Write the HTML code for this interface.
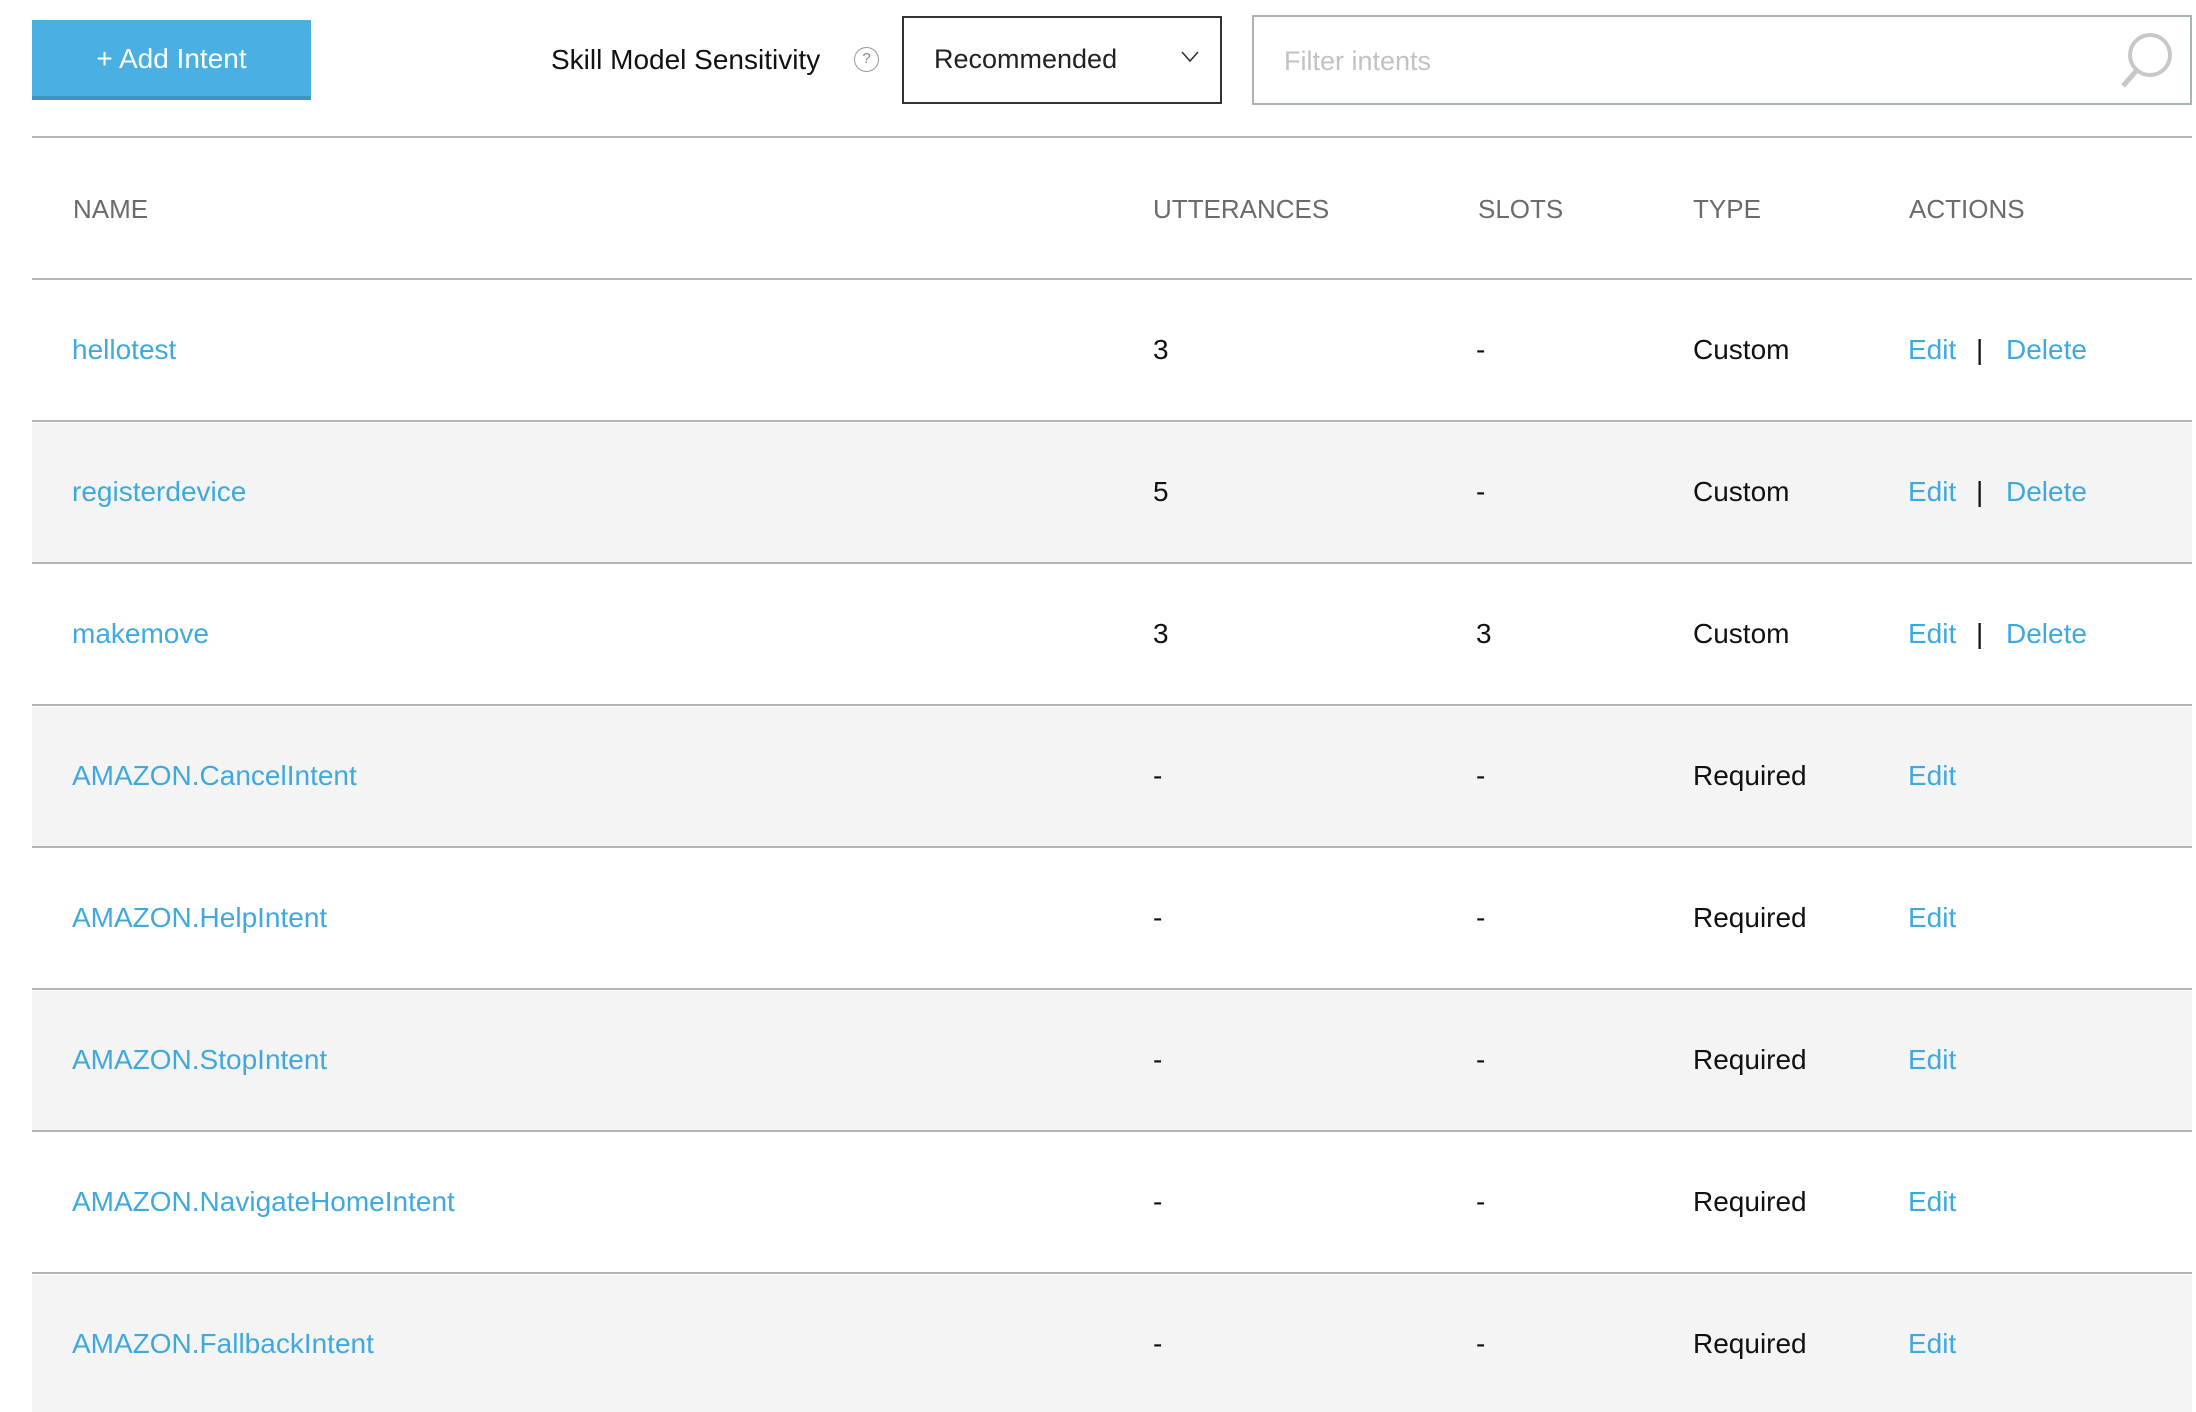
<!DOCTYPE html>
<html><head><meta charset="utf-8"><style>
*{margin:0;padding:0;box-sizing:border-box}
body{width:2196px;height:1412px;background:#fff;font-family:"Liberation Sans",sans-serif;position:relative;overflow:hidden;color:#111}
.abs{position:absolute}
.btn{left:32px;top:20px;width:279px;height:80px;background:#4aafe1;border-bottom:4px solid #3d95c0;color:#fff;font-size:28px;text-align:center;line-height:78px}
.lbl{left:551px;top:44px;font-size:28px;color:#111}
.help{left:854px;top:47px;width:25px;height:25px;border:1.5px solid #999;border-radius:50%;font-size:15px;color:#888;text-align:center;line-height:22px}
.dd{left:902px;top:16px;width:320px;height:88px;border:2px solid #333}
.dd span{position:absolute;left:30px;top:26px;font-size:27px;color:#222}
.flt{left:1252px;top:15px;width:940px;height:90px;border:2px solid #a9b3b3}
.flt span{position:absolute;left:30px;top:29px;font-size:27px;color:#c2c2c2}
.line{left:32px;width:2160px;height:2px;background:#b5b5b8}
.row{left:32px;width:2160px;height:140px}
.t{position:absolute;font-size:28px;line-height:30px}
.h{color:#6b6b6b;font-size:26px}
.a{color:#3fa9df}
</style></head><body>
<div class="abs btn">+ Add Intent</div>
<div class="abs lbl">Skill Model Sensitivity</div>
<div class="abs help">?</div>
<div class="abs dd"><span>Recommended</span>
<svg class="abs" style="left:276px;top:32px" width="20" height="14"><path d="M2 2 L10 11 L18 2" stroke="#333" stroke-width="1.6" fill="none"/></svg></div>
<div class="abs flt"><span>Filter intents</span></div>
<svg class="abs" style="left:2110px;top:25px" width="70" height="70"><circle cx="40" cy="30" r="20" stroke="#c8c8c8" stroke-width="4" fill="none"/><path d="M27 45 L13 61" stroke="#c8c8c8" stroke-width="5"/></svg>

<div class="abs line" style="top:136px"></div>
<div class="t h" style="left:73px;top:194px">NAME</div>
<div class="t h" style="left:1153px;top:194px">UTTERANCES</div>
<div class="t h" style="left:1478px;top:194px">SLOTS</div>
<div class="t h" style="left:1693px;top:194px">TYPE</div>
<div class="t h" style="left:1909px;top:194px">ACTIONS</div>

<div class="abs row" style="top:423px;background:#f4f4f4"></div>
<div class="abs row" style="top:707px;background:#f4f4f4"></div>
<div class="abs row" style="top:991px;background:#f4f4f4"></div>
<div class="abs row" style="top:1275px;background:#f4f4f4;height:137px"></div>
<div class="abs line" style="top:278px"></div>
<div class="abs line" style="top:420px"></div>
<div class="abs line" style="top:562px"></div>
<div class="abs line" style="top:704px"></div>
<div class="abs line" style="top:846px"></div>
<div class="abs line" style="top:988px"></div>
<div class="abs line" style="top:1130px"></div>
<div class="abs line" style="top:1272px"></div>

<div class="t a" style="left:72px;top:335px">hellotest</div>
<div class="t" style="left:1153px;top:335px">3</div>
<div class="t" style="left:1476px;top:335px">-</div>
<div class="t" style="left:1693px;top:335px">Custom</div>
<div class="t a" style="left:1908px;top:335px">Edit</div><div class="t" style="left:1976px;top:335px">|</div><div class="t a" style="left:2006px;top:335px">Delete</div>

<div class="t a" style="left:72px;top:477px">registerdevice</div>
<div class="t" style="left:1153px;top:477px">5</div>
<div class="t" style="left:1476px;top:477px">-</div>
<div class="t" style="left:1693px;top:477px">Custom</div>
<div class="t a" style="left:1908px;top:477px">Edit</div><div class="t" style="left:1976px;top:477px">|</div><div class="t a" style="left:2006px;top:477px">Delete</div>

<div class="t a" style="left:72px;top:619px">makemove</div>
<div class="t" style="left:1153px;top:619px">3</div>
<div class="t" style="left:1476px;top:619px">3</div>
<div class="t" style="left:1693px;top:619px">Custom</div>
<div class="t a" style="left:1908px;top:619px">Edit</div><div class="t" style="left:1976px;top:619px">|</div><div class="t a" style="left:2006px;top:619px">Delete</div>

<div class="t a" style="left:72px;top:761px">AMAZON.CancelIntent</div>
<div class="t" style="left:1153px;top:761px">-</div><div class="t" style="left:1476px;top:761px">-</div>
<div class="t" style="left:1693px;top:761px">Required</div><div class="t a" style="left:1908px;top:761px">Edit</div>

<div class="t a" style="left:72px;top:903px">AMAZON.HelpIntent</div>
<div class="t" style="left:1153px;top:903px">-</div><div class="t" style="left:1476px;top:903px">-</div>
<div class="t" style="left:1693px;top:903px">Required</div><div class="t a" style="left:1908px;top:903px">Edit</div>

<div class="t a" style="left:72px;top:1045px">AMAZON.StopIntent</div>
<div class="t" style="left:1153px;top:1045px">-</div><div class="t" style="left:1476px;top:1045px">-</div>
<div class="t" style="left:1693px;top:1045px">Required</div><div class="t a" style="left:1908px;top:1045px">Edit</div>

<div class="t a" style="left:72px;top:1187px">AMAZON.NavigateHomeIntent</div>
<div class="t" style="left:1153px;top:1187px">-</div><div class="t" style="left:1476px;top:1187px">-</div>
<div class="t" style="left:1693px;top:1187px">Required</div><div class="t a" style="left:1908px;top:1187px">Edit</div>

<div class="t a" style="left:72px;top:1329px">AMAZON.FallbackIntent</div>
<div class="t" style="left:1153px;top:1329px">-</div><div class="t" style="left:1476px;top:1329px">-</div>
<div class="t" style="left:1693px;top:1329px">Required</div><div class="t a" style="left:1908px;top:1329px">Edit</div>
</body></html>
